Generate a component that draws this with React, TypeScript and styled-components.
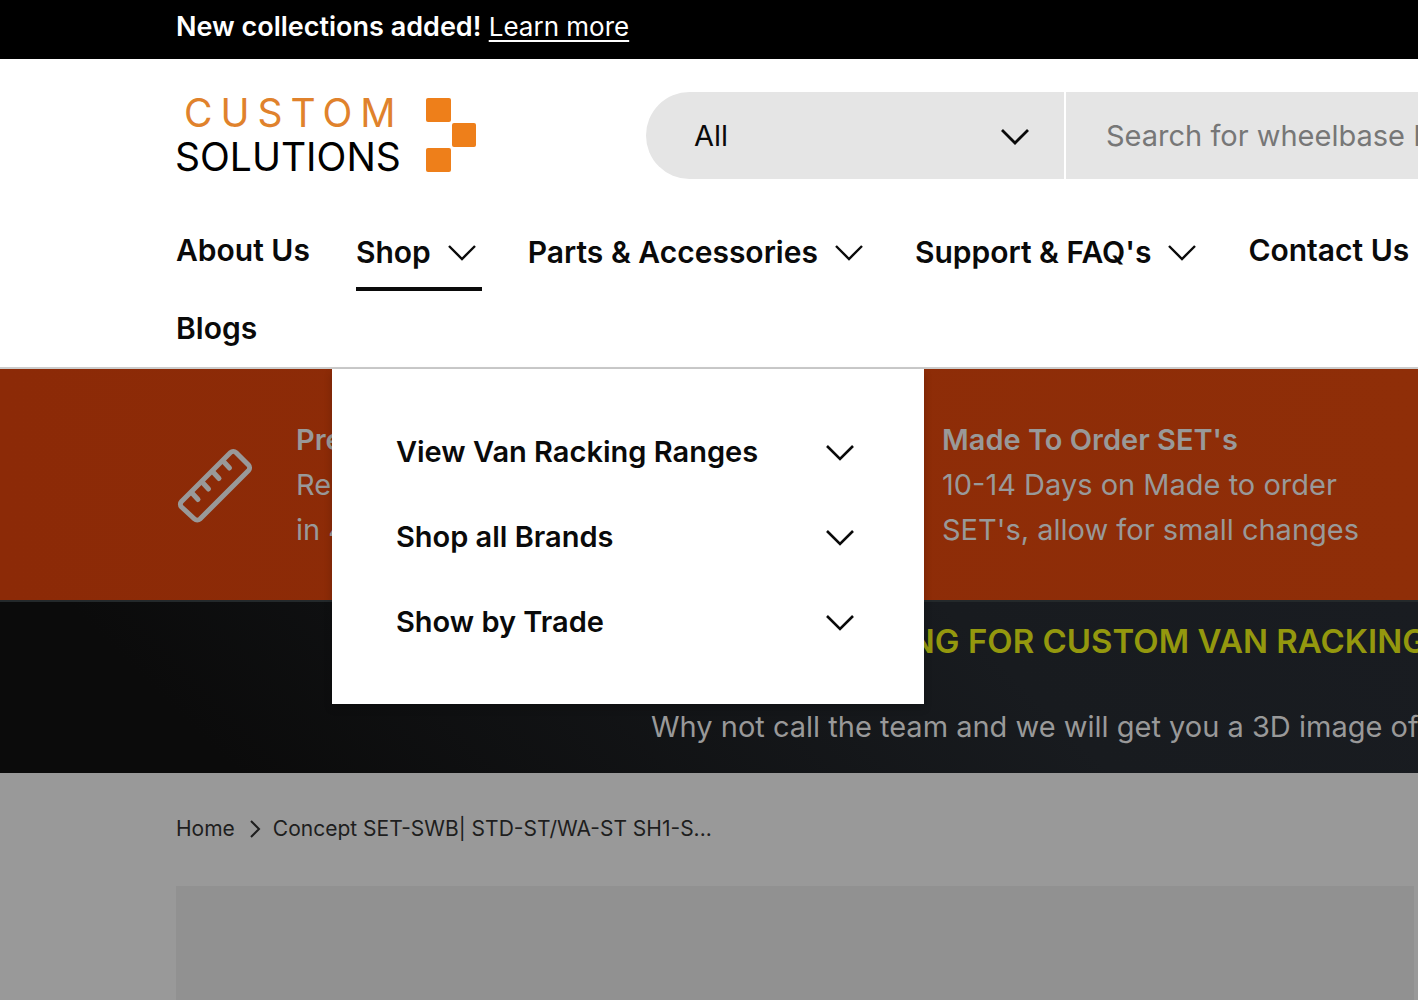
import React from "react";
import styled, { createGlobalStyle } from "styled-components";

const GlobalStyle = createGlobalStyle`
  *, *::before, *::after { box-sizing: border-box; }
  body {
    margin: 0;
    min-height: 100vh;
    overflow-x: hidden;
    background: #999999;
    color: #0a0a0a;
    font-family: Inter, "Liberation Sans", sans-serif;
    font-size: 29px;
    line-height: 45px;
  }
  a { color: inherit; text-decoration: none; }
  ul, ol { list-style: none; margin: 0; padding: 0; }
  h2, h3, p { margin: 0; font-size: inherit; font-weight: inherit; }
  button, input, select { font: inherit; color: inherit; border: 0; margin: 0; }
`;

const Page = styled.div`
  overflow: hidden;
  min-height: 100vh;
  display: flex;
  flex-direction: column;
`;

const Announcement = styled.div`
  padding: 4px 0 10px 176px;
  background: #000;
  color: #fff;
  font-size: 26px;
`;

const AnnouncementLead = styled.strong`
  font-size: 27px;
  font-weight: 600;
`;

const AnnouncementLink = styled.a`
  text-decoration: underline;
  text-decoration-thickness: 2px;
  text-underline-offset: 4px;
`;

const Header = styled.header`
  position: relative;
  z-index: 2;
  padding: 33px 0 0 176px;
  background: #fff;
  border-bottom: 2px solid #cccccc;
`;

const HeaderTop = styled.div`
  display: flex;
  align-items: center;
  gap: 170px;
`;

const LogoLink = styled.a`
  flex: none;
  display: block;
  height: 78px;
`;

const LogoDrawing = styled.svg`
  display: block;
  overflow: visible;
`;

const SearchForm = styled.form`
  flex: 1;
  min-width: 0;
  height: 87px;
  display: flex;
  gap: 2px;
`;

const SelectWrap = styled.div`
  position: relative;
  flex: 0 0 418px;
`;

const CategorySelect = styled.select`
  appearance: none;
  width: 100%;
  height: 100%;
  padding: 0 80px 0 48px;
  background: #e5e5e5;
  border-radius: 44px 0 0 44px;
`;

const SelectIcon = styled.span`
  position: absolute;
  right: 29px;
  top: 24px;
  height: 40px;
  pointer-events: none;
`;

const SearchInput = styled.input`
  flex: 1;
  min-width: 0;
  padding: 0 0 0 40px;
  border-radius: 0;
  background: #e5e5e5;
  &::placeholder { color: #777777; opacity: 1; }
`;

const NavList = styled.ul`
  display: flex;
  flex-wrap: wrap;
  column-gap: 46px;
  margin-top: 32px;
  font-size: 30px;
`;

const NavLink = styled.a`
  display: flex;
  align-items: center;
  height: 78px;
  font-weight: 600;
`;

const NavButton = styled.button<{ $open?: boolean }>`
  display: flex;
  align-items: center;
  gap: 11px;
  height: 80px;
  margin-bottom: -2px;
  padding: 2px 0 0;
  background: none;
  font-weight: 600;
  box-shadow: ${(p) => (p.$open ? "inset 0 -4px 0 #0a0a0a" : "none")};
`;

const DropMenu = styled.ul`
  position: absolute;
  top: calc(100% + 2px);
  width: 592px;
  margin-left: -24px;
  padding: 40px 64px;
  background: #fff;
  box-shadow: 0 4px 8px rgba(0, 0, 0, 0.2);
  font-size: 29px;
`;

const DropButton = styled.button`
  display: flex;
  align-items: center;
  justify-content: space-between;
  width: 100%;
  padding: 20px 0;
  background: none;
  font-weight: 600;
  text-align: left;
`;

const Chevron = styled.svg`
  display: block;
  flex: none;
  width: 40px;
  height: 40px;
  fill: none;
  stroke: currentColor;
`;

const UspBar = styled.ul`
  display: flex;
  padding: 48px 0 48px 176px;
  background: linear-gradient(90deg, #8c2a07, #8f2e08);
  color: #999999;
`;

const UspItem = styled.li`
  flex: 0 0 646px;
  display: flex;
  align-items: center;
  gap: 40px;
`;

const UspText = styled.div`
  max-width: 440px;
`;

const UspTitle = styled.h3`
  font-weight: 600;
`;

const UspIcon = styled.svg`
  flex: none;
  width: 80px;
  height: 80px;
  fill: none;
  stroke: currentColor;
  stroke-width: 5;
  stroke-linecap: round;
  stroke-linejoin: round;
`;

const Promo = styled.section`
  padding: 17px 0 24px 651px;
  border-top: 2px solid #24292b;
  background: linear-gradient(45deg, #0b0b0b 15%, #181b1f 70%, #191c21);
  color: #999999;
  white-space: nowrap;
`;

const PromoTitle = styled.h2`
  margin-bottom: 40px;
  padding-left: 4px;
  color: #94980e;
  font-size: 33px;
  font-weight: 600;
`;

const Content = styled.main`
  flex: 1;
  display: flex;
  flex-direction: column;
  padding: 33px 4px 0 176px;
`;

const Crumbs = styled.ol`
  display: flex;
  align-items: center;
  gap: 12px;
  color: #1e1e1e;
  font-size: 21px;
`;

const Crumb = styled.li`
  display: flex;
  align-items: center;
  gap: 14px;
`;

const Gallery = styled.section`
  flex: 1;
  min-height: 114px;
  margin-top: 35px;
  background: #919191;
`;

const ChevronDown = ({ weight = 2.4 }: { weight?: number }) => (
  <Chevron viewBox="0 0 40 40" strokeWidth={weight} aria-hidden="true">
    <path d="M7 14l13 13 13-13" />
  </Chevron>
);

const Logo = () => (
  <LogoDrawing width="300" height="78" viewBox="0 0 300 78" role="img" aria-label="Custom Solutions">
    <g fontFamily="Inter, sans-serif" fontWeight="400" fontSize="39">
      <text x="8" y="30" fill="#e0822c" letterSpacing="8">CUSTOM</text>
      <text x="-1" y="74" fill="#000">SOLUTIONS</text>
    </g>
    <g fill="#ee7f1a">
      <rect x="250" y="1" width="25" height="24" rx="2" />
      <rect x="276" y="26" width="24" height="24" rx="2" />
      <rect x="250" y="51" width="25" height="24" rx="2" />
    </g>
  </LogoDrawing>
);

const Ruler = () => (
  <UspIcon viewBox="0 0 80 80" aria-hidden="true">
    <path d="M5.500 56.500L54.500 7.500a4 4 0 0 1 5.500 0L72.500 20a4 4 0 0 1 0 5.500L24 74a4 4 0 0 1-5.500 0L5.500 62a4 4 0 0 1 0-5.500z" />
    <path d="M16 48l6 6.500M26.500 37.500l6 6.500M37 27l6 6.500M47.500 16.500l6 6.500" />
  </UspIcon>
);

const Box = () => (
  <UspIcon viewBox="0 0 80 80" aria-hidden="true">
    <path d="M8 22l32-16 32 16v36L40 74 8 58zM8 22l32 16 32-16M40 38v36" />
  </UspIcon>
);

const menuItems = ["View Van Racking Ranges", "Shop all Brands", "Show by Trade"];

export default function App() {
  return (
    <>
      <GlobalStyle />
      <Page>
        <Announcement>
          <AnnouncementLead>New collections added!</AnnouncementLead>{" "}
          <AnnouncementLink href="#">Learn more</AnnouncementLink>
        </Announcement>

        <Header>
          <HeaderTop>
            <LogoLink href="#"><Logo /></LogoLink>
            <SearchForm role="search">
              <SelectWrap>
                <CategorySelect aria-label="Product type" defaultValue="All">
                  <option>All</option>
                </CategorySelect>
                <SelectIcon><ChevronDown weight={2.8} /></SelectIcon>
              </SelectWrap>
              <SearchInput type="text" aria-label="Search" placeholder="Search for wheelbase LWB" />
            </SearchForm>
          </HeaderTop>

          <nav aria-label="Main">
            <NavList>
              <li><NavLink href="#">About Us</NavLink></li>
              <li>
                <NavButton $open aria-expanded="true">Shop <ChevronDown /></NavButton>
                <DropMenu>
                  {menuItems.map((label) => (
                    <li key={label}>
                      <DropButton>{label}<ChevronDown weight={2.6} /></DropButton>
                    </li>
                  ))}
                </DropMenu>
              </li>
              <li><NavButton aria-expanded="false">Parts &amp; Accessories <ChevronDown /></NavButton></li>
              <li><NavButton aria-expanded="false">Support &amp; FAQ's <ChevronDown /></NavButton></li>
              <li><NavLink href="#">Contact Us</NavLink></li>
              <li><NavLink href="#">Blogs</NavLink></li>
            </NavList>
          </nav>
        </Header>

        <UspBar>
          <UspItem>
            <Ruler />
            <UspText>
              <UspTitle>Pre Built</UspTitle>
              <p>Ready<br />in 48h</p>
            </UspText>
          </UspItem>
          <UspItem>
            <Box />
            <UspText>
              <UspTitle>Made To Order SET's</UspTitle>
              <p>10-14 Days on Made to order SET's, allow for small changes</p>
            </UspText>
          </UspItem>
        </UspBar>

        <Promo>
          <PromoTitle>ARE YOU LOOKING FOR CUSTOM VAN RACKING</PromoTitle>
          <p>Why not call the team and we will get you a 3D image of</p>
        </Promo>

        <Content>
          <nav aria-label="Breadcrumb">
            <Crumbs>
              <Crumb>
                <a href="#">Home</a>
                <svg width="12" height="20" viewBox="0 0 12 20" fill="none" stroke="currentColor" strokeWidth="2" aria-hidden="true">
                  <path d="M2 2l8 8-8 8" />
                </svg>
              </Crumb>
              <Crumb aria-current="page">Concept SET-SWB| STD-ST/WA-ST SH1-S...</Crumb>
            </Crumbs>
          </nav>
          <Gallery aria-label="Product images" />
        </Content>
      </Page>
    </>
  );
}
